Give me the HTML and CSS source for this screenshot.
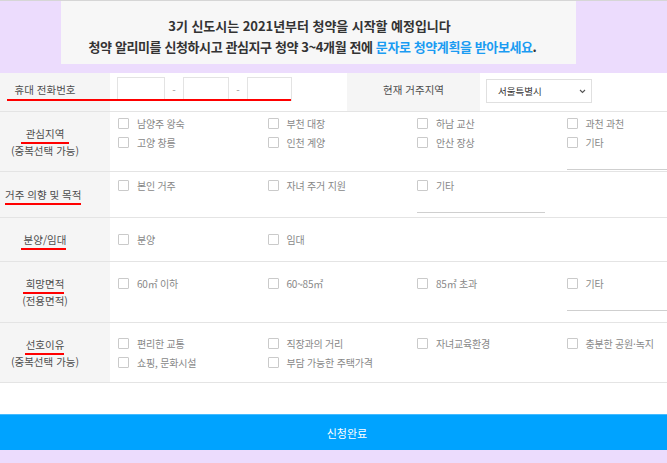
FILE: index.html
```html
<!DOCTYPE html>
<html lang="ko">
<head>
<meta charset="utf-8">
<title>청약 알리미</title>
<link rel="stylesheet" href="styles.css">
</head>
<body>
<div class="banner">
  <p class="banner__lead">3기 신도시는 2021년부터 청약을 시작할 예정입니다</p>
  <p>청약 알리미를 신청하시고 관심지구 청약 3~4개월 전에 <span class="hl">문자로 청약계획을 받아보세요</span>.</p>
</div>

<form class="form">
  <div class="row row--phone">
    <div class="label"><span>휴대 전화번호</span></div>
    <div class="phone">
      <input class="tel" type="text">
      <span class="dash">-</span>
      <input class="tel tel--mid" type="text">
      <span class="dash">-</span>
      <input class="tel tel--last" type="text">
    </div>
    <div class="label label--sub">현재 거주지역</div>
    <div class="select-cell">
      <div class="select">
        <span>서울특별시</span>
        <svg width="7" height="5" viewBox="0 0 7 5"><path d="M1 1 L3.5 3.5 L6 1" fill="none" stroke="#555" stroke-width="1.1"/></svg>
      </div>
    </div>
    <div class="redline"></div>
  </div>

  <div class="row row--compact">
    <div class="label"><span class="mark">관심지역</span><br>(중복선택 가능)</div>
    <div class="content">
      <div class="opts">
        <div class="opt"><label class="chk"><span class="box"></span>남양주 왕숙</label></div>
        <div class="opt"><label class="chk"><span class="box"></span>부천 대장</label></div>
        <div class="opt"><label class="chk"><span class="box"></span>하남 교산</label></div>
        <div class="opt"><label class="chk"><span class="box"></span>과천 과천</label></div>
        <div class="opt"><label class="chk"><span class="box"></span>고양 창릉</label></div>
        <div class="opt"><label class="chk"><span class="box"></span>인천 계양</label></div>
        <div class="opt"><label class="chk"><span class="box"></span>안산 장상</label></div>
        <div class="opt"><label class="chk"><span class="box"></span>기타</label><input class="etc" type="text"></div>
      </div>
    </div>
  </div>

  <div class="row row--tall">
    <div class="label label--wide"><span class="mark mark--wide">거주 의향 및 목적</span></div>
    <div class="content">
      <div class="opts">
        <div class="opt"><label class="chk"><span class="box"></span>본인 거주</label></div>
        <div class="opt"><label class="chk"><span class="box"></span>자녀 주거 지원</label></div>
        <div class="opt"><label class="chk"><span class="box"></span>기타</label><input class="etc" type="text"></div>
      </div>
    </div>
  </div>

  <div class="row">
    <div class="label"><span class="mark mark--left">분양/임대</span></div>
    <div class="content">
      <div class="opts">
        <div class="opt"><label class="chk"><span class="box"></span>분양</label></div>
        <div class="opt"><label class="chk"><span class="box"></span>임대</label></div>
      </div>
    </div>
  </div>

  <div class="row">
    <div class="label"><span class="mark mark--left">희망면적</span><br>(전용면적)</div>
    <div class="content">
      <div class="opts">
        <div class="opt"><label class="chk"><span class="box"></span>60㎡ 이하</label></div>
        <div class="opt"><label class="chk"><span class="box"></span>60~85㎡</label></div>
        <div class="opt"><label class="chk"><span class="box"></span>85㎡ 초과</label></div>
        <div class="opt"><label class="chk"><span class="box"></span>기타</label><input class="etc" type="text"></div>
      </div>
    </div>
  </div>

  <div class="row row--compact">
    <div class="label"><span class="mark mark--tight">선호이유</span><br>(중복선택 가능)</div>
    <div class="content">
      <div class="opts">
        <div class="opt"><label class="chk"><span class="box"></span>편리한 교통</label></div>
        <div class="opt"><label class="chk"><span class="box"></span>직장과의 거리</label></div>
        <div class="opt"><label class="chk"><span class="box"></span>자녀교육환경</label></div>
        <div class="opt"><label class="chk"><span class="box"></span>충분한 공원·녹지</label></div>
        <div class="opt"><label class="chk"><span class="box"></span>쇼핑, 문화시설</label></div>
        <div class="opt"><label class="chk"><span class="box"></span>부담 가능한 주택가격</label></div>
      </div>
    </div>
  </div>

  <div class="spacer"></div>
  <button class="submit" type="button">신청완료</button>
</form>
</body>
</html>
```

FILE: styles.css
```css
html, body {
  overflow: hidden;
}
body {
  margin: 0;
  width: 667px;
  height: 462px;
  background: #ecdcfd;
  border-top: 1px solid #d6d6d6;
  font-family: "Noto Sans CJK KR", "Noto Sans", sans-serif;
  color: #555;
}

.banner {
  margin-left: 61px;
  width: 515px;
  height: 63px;
  box-sizing: border-box;
  padding: 14px 12px 0 0;
  background: #f7f7f7;
  text-align: center;
  font-size: 13px;
  font-weight: 700;
  line-height: 21px;
  letter-spacing: -0.4px;
  color: #333;
}
.banner p {
  margin: 0;
}
.banner .banner__lead {
  letter-spacing: -0.05px;
  padding-right: 6px;
}
.hl {
  color: #1b9cf2;
}

.form {
  margin-top: 9px;
  width: 716px;
  background: #fff;
}

.row {
  display: grid;
  grid-template-columns: 110px 1fr;
  border-bottom: 1px solid #e4e4e4;
}
.row--phone {
  position: relative;
  grid-template-columns: 110px 237px 133px 1fr;
  height: 38px;
}

.label {
  background: #f5f5f5;
  padding: 13px 20px 13px 0;
  text-align: center;
  font-size: 10.5px;
  line-height: 17px;
  color: #4d4d4d;
  white-space: nowrap;
}
.row--compact .label {
  padding-bottom: 12px;
}
.row--tall .label {
  padding-top: 14px;
  padding-bottom: 14px;
}
.row--phone .label {
  padding: 0 20px 6px 0;
  display: flex;
  align-items: center;
  justify-content: center;
}
.row--phone .label--sub {
  padding: 0 0 6px 0;
}
.row--tall .label--wide {
  padding-left: 5px;
  text-align: left;
}

/* red hand-drawn underline under the label keyword */
.mark {
  display: inline-block;
  padding: 0 5px 2px;
  margin: 0 -5px -2px;
  background: linear-gradient(#f00, #f00) left bottom / 100% 2px no-repeat;
}
.mark--wide {
  padding: 0 0 2px;
  margin: 0 0 -2px;
}
.mark--left {
  padding: 0 0 2px 3px;
  margin: 0 0 -2px -3px;
}
.mark--tight {
  padding: 0 0 2px 1px;
  margin: 0 0 -2px -1px;
}

.phone {
  display: flex;
  align-items: center;
  padding: 0 0 6px 7px;
}
.tel {
  width: 48px;
  height: 24px;
  box-sizing: border-box;
  border: 1px solid #e3e3e3;
  margin: 0;
  padding: 0;
  background: #fff;
}
.tel--mid {
  width: 46px;
}
.tel--last {
  width: 45px;
}
.dash {
  width: 18px;
  text-align: center;
  font-size: 10px;
  color: #999;
}

.select-cell {
  display: flex;
  align-items: center;
  padding: 0 0 2px 6px;
}
.select {
  width: 106px;
  height: 24px;
  box-sizing: border-box;
  border: 1px solid #e0e0e0;
  display: flex;
  align-items: center;
  justify-content: space-between;
  padding: 0 5px 0 11px;
  font-size: 9.5px;
  color: #333;
}

.redline {
  position: absolute;
  left: 7px;
  top: 26px;
  width: 284px;
  height: 2px;
  background: #f00;
}

.content {
  display: flex;
  align-items: center;
  padding-left: 8px;
}
.opts {
  display: grid;
  grid-template-columns: repeat(4, 149.5px);
  align-items: start;
}
.chk {
  display: flex;
  align-items: center;
  height: 19px;
  font-size: 10px;
  letter-spacing: -0.2px;
  color: #888;
  white-space: nowrap;
}
.box {
  width: 11px;
  height: 11px;
  box-sizing: border-box;
  border: 1px solid #cacaca;
  border-radius: 1px;
  background: #fff;
  margin-right: 8px;
  flex: none;
}
.etc {
  display: block;
  width: 128px;
  height: 18px;
  box-sizing: border-box;
  margin: 0;
  padding: 0;
  border: 0;
  border-bottom: 1px solid #cfcfcf;
  background: transparent;
}

.spacer {
  height: 31px;
}
.submit {
  display: block;
  width: 694px;
  height: 36px;
  margin: 0;
  padding: 0;
  border: 0;
  border-top: 1px solid #45bbff;
  background: #00a3ff;
  color: #fff;
  font-family: "Noto Sans CJK KR", "Noto Sans", sans-serif;
  font-size: 11px;
}
```
